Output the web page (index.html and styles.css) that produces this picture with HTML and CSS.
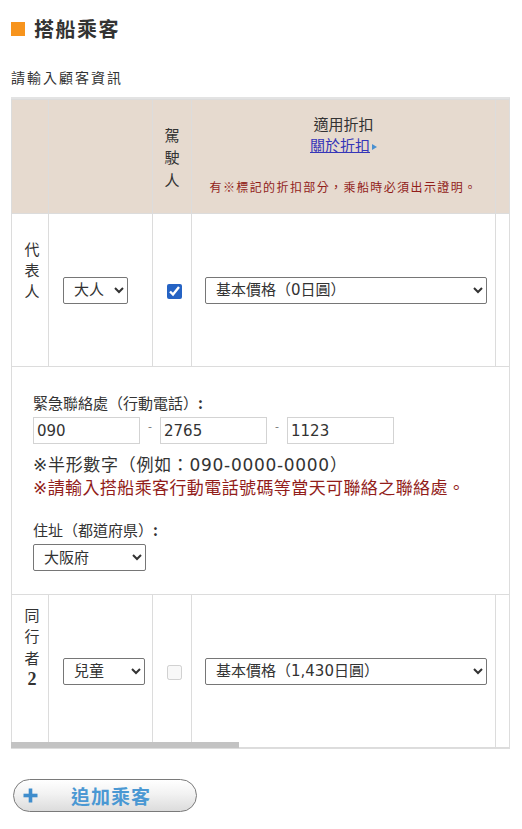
FILE: index.html
```html
<!DOCTYPE html>
<html lang="zh-Hant">
<head>
<meta charset="utf-8">
<title>搭船乘客</title>
<link rel="stylesheet" href="styles.css">
</head>
<body>
  <h2 class="title"><span class="title-mark"></span>搭船乘客</h2>
  <p class="lead">請輸入顧客資訊</p>

  <div class="grid-wrap">
    <table class="grid">
      <colgroup>
        <col class="c-label"><col class="c-type"><col class="c-driver"><col class="c-discount"><col class="c-rest">
      </colgroup>
      <thead>
        <tr class="row-head">
          <th></th>
          <th></th>
          <th class="vtext head-driver">駕駛人</th>
          <th class="head-discount">
            <div class="hd-title">適用折扣</div>
            <div class="hd-link"><a href="#" class="link">關於折扣</a><span class="tri"></span></div>
            <div class="hd-note">有※標記的折扣部分，乘船時必須出示證明。</div>
          </th>
          <th></th>
        </tr>
      </thead>
      <tbody>
        <tr class="row-main row-first">
          <td class="vtext label label-first">代表人</td>
          <td class="cell-type">
            <select class="sel sel-adult"><option>大人</option></select>
          </td>
          <td class="cell-check"><input type="checkbox" class="chk" checked></td>
          <td class="cell-discount">
            <select class="sel sel-price"><option>基本價格（0日圓）</option></select>
          </td>
          <td></td>
        </tr>
        <tr class="row-extra">
          <td colspan="5" class="extra">
            <div class="field-label">緊急聯絡處（行動電話）<b>:</b></div>
            <div class="phone">
              <input type="text" class="tel" value="090">
              <span class="dash">-</span>
              <input type="text" class="tel" value="2765">
              <span class="dash">-</span>
              <input type="text" class="tel" value="1123">
            </div>
            <p class="note note-first">※半形數字（例如：090-0000-0000）</p>
            <p class="note note-red">※請輸入搭船乘客行動電話號碼等當天可聯絡之聯絡處。</p>
            <div class="field-label field-gap">住址（都道府県）<b>:</b></div>
            <select class="sel sel-pref"><option>大阪府</option></select>
          </td>
        </tr>
        <tr class="row-main row-last">
          <td class="vtext label label-last">同行者<b class="num">2</b></td>
          <td class="cell-type">
            <select class="sel sel-child"><option>兒童</option></select>
          </td>
          <td class="cell-check"><input type="checkbox" class="chk" disabled></td>
          <td class="cell-discount">
            <select class="sel sel-price"><option>基本價格（1,430日圓）</option></select>
          </td>
          <td></td>
        </tr>
      </tbody>
    </table>
    <div class="scroll-thumb"></div>
  </div>

  <button type="button" class="add-btn">
    <svg class="add-plus" width="15" height="15" viewBox="0 0 15 15" aria-hidden="true">
      <rect x="5.7" y="0.5" width="3.6" height="14" fill="#3f8dcc"/>
      <rect x="0.5" y="5.7" width="14" height="3.6" fill="#3f8dcc"/>
    </svg>
    <span class="add-text">追加乘客</span>
  </button>
</body>
</html>
```

FILE: styles.css
```css
* { box-sizing: border-box; }

body {
  margin: 0;
  padding: 18px 11px 0;
  background: #fff;
  color: #333;
  font-family: "DejaVu Sans", "Noto Sans CJK TC", sans-serif;
}

.title {
  display: flex;
  align-items: center;
  gap: 9px;
  margin: 0;
  font-family: "Noto Sans CJK TC", sans-serif;
  font-size: 20px;
  line-height: 22px;
  font-weight: bold;
  letter-spacing: 1.5px;
  color: #333;
}

.title-mark {
  width: 14px;
  height: 14px;
  background: #f7941d;
}

.lead {
  margin: 27px 0 10px;
  font-family: "Noto Sans CJK TC", sans-serif;
  font-size: 14px;
  line-height: 20px;
  letter-spacing: 2px;
}

.grid-wrap {
  position: relative;
  width: 499px;
  overflow: hidden;
  border-top: 2px solid #e3e3e3;
  border-right: 1px solid #ddd;
  border-bottom: 1px solid #ddd;
}

.grid {
  width: 1083px;
  border-collapse: collapse;
  table-layout: fixed;
}

.c-label { width: 37px; }
.c-type { width: 104px; }
.c-driver { width: 39px; }
.c-discount { width: 304px; }

.grid th,
.grid td {
  border: 1px solid #dcdcdc;
  padding: 0;
  vertical-align: middle;
  font-weight: normal;
}

.grid .row-head th {
  height: 114px;
  background: #e6dacf;
}

.grid .vtext {
  font-family: "Noto Sans CJK TC", sans-serif;
  font-size: 15px;
  text-align: center;
  word-break: break-all;
  padding-left: 12px;
  padding-right: 8px;
}

.grid .head-driver {
  line-height: 22.5px;
  padding-left: 10px;
  padding-right: 10px;
  padding-top: 2px;
}

.grid .head-discount {
  text-align: center;
  font-family: "Noto Sans CJK TC", sans-serif;
  padding-bottom: 5px;
}

.hd-title {
  font-size: 15px;
  line-height: 21px;
}

.hd-link {
  font-size: 15px;
  line-height: 21px;
}

.link {
  color: #3636b8;
  text-decoration: underline;
}

.tri {
  display: inline-block;
  width: 0;
  height: 0;
  margin-left: 2px;
  border-left: 5px solid #4a90d0;
  border-top: 3.5px solid transparent;
  border-bottom: 3.5px solid transparent;
  vertical-align: 1px;
}

.hd-note {
  margin-top: 24px;
  font-size: 12px;
  line-height: 16px;
  letter-spacing: 1.4px;
  color: #921d1a;
}

.grid .row-first td {
  height: 153px;
  border-bottom: 1px dotted #bdbdbd;
}
.grid .row-last td { height: 153px; }

.grid .label { line-height: 21px; }
.grid .label-first { padding-bottom: 42px; }
.grid .label-last { line-height: 21.5px; padding-bottom: 48px; }

.num {
  font-family: "Liberation Serif", serif;
  font-size: 18px;
  font-weight: bold;
}

.grid .cell-type { padding-left: 14px; }
.grid .cell-discount { padding-left: 13px; }
.grid .cell-check { text-align: center; padding-left: 5px; }

.sel {
  height: 27px;
  padding: 0 4px 0 6px;
  border: 1px solid #767676;
  border-radius: 2px;
  background: #fff;
  color: #333;
  font-family: "DejaVu Sans", "Noto Sans CJK TC", sans-serif;
  font-size: 15px;
}

.sel-adult { width: 65px; }
.sel-child { width: 82px; }
.sel-price { width: 282px; }
.sel-pref { width: 113px; display: block; }

.chk {
  width: 15px;
  height: 15px;
  margin: 0;
  accent-color: #2563c4;
  vertical-align: middle;
}

.grid .extra {
  height: 228px;
  padding: 25px 0 20px 21px;
  vertical-align: top;
  text-align: left;
}

.field-label {
  font-family: "Noto Sans CJK TC", sans-serif;
  font-size: 15px;
  line-height: 22px;
  margin-bottom: 3px;
}

.field-gap { margin-top: 19px; margin-bottom: 3px; }

.phone {
  display: flex;
  align-items: center;
}

.tel {
  width: 107px;
  height: 27px;
  margin: 0;
  padding: 0 3px;
  border: 1px solid #d3d3d3;
  color: #333;
  font-family: "DejaVu Sans", sans-serif;
  font-size: 15px;
}

.dash {
  width: 20px;
  text-align: center;
  font-size: 11px;
  color: #777;
  margin-top: -8px;
}

.note {
  margin: 0;
  font-family: "DejaVu Sans", "Noto Sans CJK TC", sans-serif;
  font-size: 17px;
  line-height: 23px;
  letter-spacing: 0.4px;
}

.note-first { margin-top: 10px; letter-spacing: 0.7px; }

.note-red { color: #921d1a; }

.scroll-thumb {
  position: absolute;
  left: 0;
  bottom: 0;
  width: 228px;
  height: 6px;
  background: #c3c3c3;
}

.add-btn {
  display: flex;
  align-items: center;
  width: 184px;
  height: 33px;
  margin: 30px 0 0 2px;
  padding: 0 0 0 9px;
  border: 1.5px solid #7a7a7a;
  border-radius: 17px;
  background: linear-gradient(#ffffff, #f2f2f2 45%, #dcdcdc);
  cursor: pointer;
}

.add-plus { flex: none; }

.add-text {
  margin-left: 33px;
  font-family: "Noto Sans CJK TC", sans-serif;
  font-size: 19px;
  font-weight: bold;
  letter-spacing: 1px;
  color: #4a98d3;
}
```
